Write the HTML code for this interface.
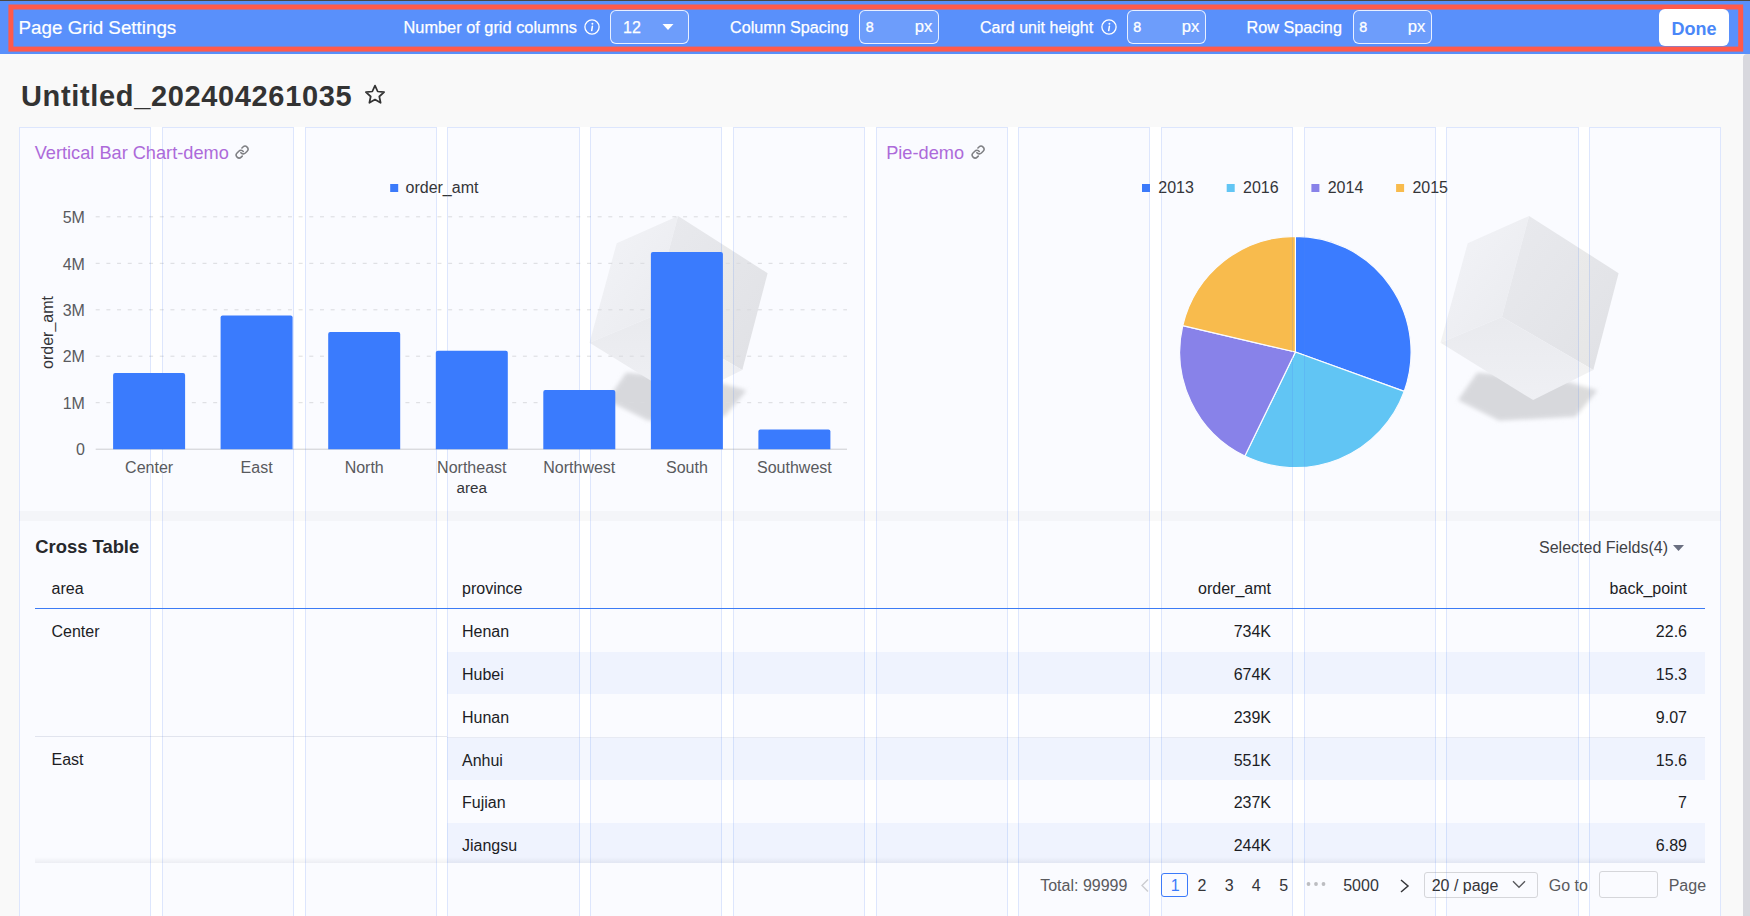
<!DOCTYPE html>
<html><head><meta charset="utf-8">
<style>
*{box-sizing:border-box;margin:0;padding:0}
html,body{width:1750px;height:916px;overflow:hidden;background:#f9f9f9;font-family:"Liberation Sans",sans-serif;position:relative}
.a{position:absolute;white-space:nowrap;line-height:1}
.w{color:#fff}
.t16{font-size:16px}
.r{text-align:right}
.c{text-align:center}
#hdr{position:absolute;left:0;top:0;width:1750px;height:54px;background:#5990fb}
#topline{position:absolute;left:0;top:0;width:1750px;height:1px;background:#4b4943}
.inp{position:absolute;top:10px;height:34px;border:1px solid rgba(255,255,255,.85);border-radius:6px;background:rgba(255,255,255,.12)}
.info{position:absolute;top:19px;width:16px;height:16px}
.card{position:absolute;background:#fff}
.col{position:absolute;top:127px;height:800px;width:132.15px;border:1px solid rgba(80,130,245,.17);background:rgba(80,130,245,.033)}
.lab{color:#595959}
.dk{color:#262626}
</style></head><body>
<div id="hdr"></div>
<div id="topline"></div>
<svg class="a" style="left:0;top:0" width="1750" height="60"><rect x="10.9" y="7.0" width="1729.8" height="42.1" fill="none" stroke="#ff5a4b" stroke-width="5"/></svg>
<div class="a w" style="left:18.6px;top:19.3px;font-size:18.8px;-webkit-text-stroke:0.2px #fff">Page Grid Settings</div>
<div class="a w" style="left:403.5px;top:18.9px;font-size:16.35px;-webkit-text-stroke:0.25px #fff">Number of grid columns</div>
<svg class="info" style="left:584px" viewBox="0 0 16 16"><circle cx="8" cy="8" r="7.1" fill="none" stroke="#fff" stroke-width="1.3"/><circle cx="8.4" cy="4.7" r="0.95" fill="#fff"/><path d="M8.4 7.2L7.7 11.6" stroke="#fff" stroke-width="1.5" stroke-linecap="round"/></svg>
<div class="inp" style="left:610px;width:79px"></div>
<div class="a w t16" style="left:623px;top:20.1px;-webkit-text-stroke:0.25px #fff">12</div>
<svg class="a" style="left:662px;top:23px" width="12" height="8" viewBox="0 0 12 8"><path d="M0.5 1h11l-5.5 6z" fill="#fff"/></svg>
<div class="a w" style="left:730px;top:18.9px;font-size:16.15px;-webkit-text-stroke:0.25px #fff">Column Spacing</div>
<div class="inp" style="left:859px;width:80px"></div>
<div class="a w" style="left:865.7px;top:20px;font-size:14.3px;-webkit-text-stroke:0.35px #fff">8</div>
<div class="a w r" style="left:880px;width:52.3px;top:19.0px;font-size:16.6px;-webkit-text-stroke:0.2px #fff">px</div>
<div class="a w" style="left:980px;top:18.9px;font-size:16.05px;-webkit-text-stroke:0.25px #fff">Card unit height</div>
<svg class="info" style="left:1101px" viewBox="0 0 16 16"><circle cx="8" cy="8" r="7.1" fill="none" stroke="#fff" stroke-width="1.3"/><circle cx="8.4" cy="4.7" r="0.95" fill="#fff"/><path d="M8.4 7.2L7.7 11.6" stroke="#fff" stroke-width="1.5" stroke-linecap="round"/></svg>
<div class="inp" style="left:1127px;width:79px"></div>
<div class="a w" style="left:1133.2px;top:20px;font-size:14.3px;-webkit-text-stroke:0.35px #fff">8</div>
<div class="a w r" style="left:1147px;width:52.3px;top:19.0px;font-size:16.6px;-webkit-text-stroke:0.2px #fff">px</div>
<div class="a w" style="left:1246.5px;top:18.9px;font-size:16.2px;-webkit-text-stroke:0.25px #fff">Row Spacing</div>
<div class="inp" style="left:1353px;width:79px"></div>
<div class="a w" style="left:1359.2px;top:20px;font-size:14.3px;-webkit-text-stroke:0.35px #fff">8</div>
<div class="a w r" style="left:1373px;width:52.3px;top:19.0px;font-size:16.6px;-webkit-text-stroke:0.2px #fff">px</div>
<div class="a" style="left:1659px;top:9px;width:70px;height:37px;background:#fff;border-radius:6px"></div>
<div class="a c" style="left:1659px;top:19.5px;width:70px;font-size:18px;font-weight:bold;color:#4a87f8">Done</div>

<!-- title -->
<div class="a" style="left:21px;top:81.5px;font-size:29px;font-weight:bold;color:#333;letter-spacing:0.65px">Untitled_202404261035</div>
<svg class="a" style="left:364px;top:84.4px" width="22" height="22" viewBox="0 0 22 22"><path d="M11 1.6l2.7 5.9 6.4.7-4.8 4.3 1.3 6.3L11 15.6l-5.6 3.2 1.3-6.3L1.9 8.2l6.4-.7z" fill="none" stroke="#333" stroke-width="1.75" stroke-linejoin="round"/></svg>

<div class="card" style="left:19px;top:127px;width:1702px;height:384px"></div>
<div class="card" style="left:19px;top:520.5px;width:1702px;height:400px"></div>

<div id="content"><svg class="a" style="left:0;top:0" width="1750" height="916" viewBox="0 0 1750 916" font-family="Liberation Sans">
<defs><filter id="blur" x="-20%" y="-20%" width="140%" height="140%"><feGaussianBlur stdDeviation="2.2"/></filter>
<linearGradient id="gl" x1="0" y1="0" x2="1" y2="1"><stop offset="0" stop-color="#f8f8f8"/><stop offset="1" stop-color="#eeeeee"/></linearGradient>
<linearGradient id="gr" x1="0" y1="0" x2="1" y2="1"><stop offset="0" stop-color="#eeeeee"/><stop offset="1" stop-color="#e5e5e5"/></linearGradient>
<linearGradient id="gb" x1="0" y1="0" x2="0" y2="1"><stop offset="0" stop-color="#eeeeee"/><stop offset="1" stop-color="#f4f4f4"/></linearGradient>
</defs>
<polygon points="607.2,400.1 626.3,372.8 713.6,381.0 746.4,390.5 724.5,416.5 648.1,420.6" fill="#dbdbdb" filter="url(#blur)"/>
<polygon points="616.7,243.2 678.1,215.9 650.9,316.9 589.5,342.8" fill="url(#gl)"/>
<polygon points="678.1,215.9 767.6,273.2 742.3,370.1 650.9,316.9" fill="url(#gr)"/>
<polygon points="589.5,342.8 650.9,316.9 742.3,370.1 682.2,400.1" fill="url(#gb)"/>

<line x1="95.7" x2="847" y1="402.7" y2="402.7" stroke="#dedede" stroke-width="1" stroke-dasharray="4 6.68"/>
<line x1="95.7" x2="847" y1="356.2" y2="356.2" stroke="#dedede" stroke-width="1" stroke-dasharray="4 6.68"/>
<line x1="95.7" x2="847" y1="309.8" y2="309.8" stroke="#dedede" stroke-width="1" stroke-dasharray="4 6.68"/>
<line x1="95.7" x2="847" y1="263.3" y2="263.3" stroke="#dedede" stroke-width="1" stroke-dasharray="4 6.68"/>
<line x1="95.7" x2="847" y1="216.8" y2="216.8" stroke="#dedede" stroke-width="1" stroke-dasharray="4 6.68"/>
<line x1="95.7" x2="847" y1="449.2" y2="449.2" stroke="#d0d0d0" stroke-width="1"/>
<g fill="#595959" font-size="16"><text x="84.9" y="455.4" text-anchor="end">0</text>
<text x="84.9" y="408.9" text-anchor="end">1M</text>
<text x="84.9" y="362.4" text-anchor="end">2M</text>
<text x="84.9" y="316.0" text-anchor="end">3M</text>
<text x="84.9" y="269.5" text-anchor="end">4M</text>
<text x="84.9" y="223.0" text-anchor="end">5M</text>
<text x="149.1" y="472.8" text-anchor="middle">Center</text>
<text x="256.6" y="472.8" text-anchor="middle">East</text>
<text x="364.2" y="472.8" text-anchor="middle">North</text>
<text x="471.8" y="472.8" text-anchor="middle">Northeast</text><text x="471.8" y="493.4" text-anchor="middle" fill="#333" font-size="15.2">area</text>
<text x="579.3" y="472.8" text-anchor="middle">Northwest</text>
<text x="686.9" y="472.8" text-anchor="middle">South</text>
<text x="794.4" y="472.8" text-anchor="middle">Southwest</text>
</g>
<rect x="390.2" y="184" width="8" height="8" fill="#3a7afa"/>
<text x="405.5" y="192.7" font-size="16" fill="#333">order_amt</text>
<text transform="translate(53.2,332.5) rotate(-90)" text-anchor="middle" font-size="16" fill="#333">order_amt</text>
<polygon points="1458.2,400.1 1477.3,372.8 1564.6,381.0 1597.4,390.5 1575.5,416.5 1499.1,420.6" fill="#dbdbdb" filter="url(#blur)"/>
<polygon points="1467.7,243.2 1529.1,215.9 1501.9,316.9 1440.5,342.8" fill="url(#gl)"/>
<polygon points="1529.1,215.9 1618.6,273.2 1593.3,370.1 1501.9,316.9" fill="url(#gr)"/>
<polygon points="1440.5,342.8 1501.9,316.9 1593.3,370.1 1533.2,400.1" fill="url(#gb)"/>

<path d="M1295.4,352L1295.40,236.30A115.7,115.7 0 0 1 1404.19,391.38Z" fill="#3a7cff" stroke="#fff" stroke-width="1.2" stroke-linejoin="round"/>
<path d="M1295.4,352L1404.19,391.38A115.7,115.7 0 0 1 1244.86,456.08Z" fill="#62c8f4" stroke="#fff" stroke-width="1.2" stroke-linejoin="round"/>
<path d="M1295.4,352L1244.86,456.08A115.7,115.7 0 0 1 1182.76,325.58Z" fill="#8a83e9" stroke="#fff" stroke-width="1.2" stroke-linejoin="round"/>
<path d="M1295.4,352L1182.76,325.58A115.7,115.7 0 0 1 1295.40,236.30Z" fill="#fdbd48" stroke="#fff" stroke-width="1.2" stroke-linejoin="round"/>

<g font-size="16" fill="#333"><rect x="1142.0" y="184" width="8" height="8" fill="#3a7afa"/><text x="1158.3" y="192.8">2013</text>
<rect x="1226.7" y="184" width="8" height="8" fill="#62c8f4"/><text x="1243.0" y="192.8">2016</text>
<rect x="1311.4" y="184" width="8" height="8" fill="#8a83e9"/><text x="1327.7" y="192.8">2014</text>
<rect x="1396.1" y="184" width="8" height="8" fill="#fdbd48"/><text x="1412.4" y="192.8">2015</text>
</g>
</svg>
<div class="a" style="left:34.7px;top:143.8px;font-size:18.2px;color:#b06ad9">Vertical Bar Chart-demo</div>
<svg class="a" style="left:234.9px;top:144.9px" width="14.2" height="14.2" viewBox="0 0 24 24"><g fill="none" stroke="#808080" stroke-width="2.6" stroke-linecap="round"><path d="M10 13a5 5 0 0 0 7.54.54l3-3a5 5 0 0 0-7.07-7.07l-1.72 1.71"/><path d="M14 11a5 5 0 0 0-7.54-.54l-3 3a5 5 0 0 0 7.07 7.07l1.71-1.71"/></g></svg>
<div class="a" style="left:886.2px;top:143.8px;font-size:18.2px;color:#b06ad9">Pie-demo</div>
<svg class="a" style="left:970.8px;top:144.9px" width="14.2" height="14.2" viewBox="0 0 24 24"><g fill="none" stroke="#808080" stroke-width="2.6" stroke-linecap="round"><path d="M10 13a5 5 0 0 0 7.54.54l3-3a5 5 0 0 0-7.07-7.07l-1.72 1.71"/><path d="M14 11a5 5 0 0 0-7.54-.54l-3 3a5 5 0 0 0 7.07 7.07l1.71-1.71"/></g></svg>

<div class="a" style="left:35.3px;top:538.4px;font-size:18.4px;font-weight:bold;color:#262626">Cross Table</div>
<div class="a t16 r" style="left:1468px;width:200px;top:539.5px;color:#404040">Selected Fields(4)</div>
<svg class="a" style="left:1673px;top:544px" width="11" height="8" viewBox="0 0 11 8"><path d="M0 1h11L5.5 7z" fill="#6b6f7d"/></svg>
<div class="a t16" style="left:51.5px;top:581px;color:#1a1a1a">area</div>
<div class="a t16" style="left:462px;top:581px;color:#1a1a1a">province</div>
<div class="a t16 r" style="left:1071px;width:200px;top:581px;color:#1a1a1a">order_amt</div>
<div class="a t16 r" style="left:1487px;width:200px;top:581px;color:#1a1a1a">back_point</div>
<div class="a" style="left:35px;top:608px;width:1670px;height:1px;background:#3b7bf5"></div>
<div class="a" style="left:447.3px;top:652.15px;width:1257.4px;height:42.1px;background:#f4f7fe"></div>
<div class="a" style="left:447.3px;top:737.65px;width:1257.4px;height:42.1px;background:#f4f7fe"></div>
<div class="a" style="left:447.3px;top:823.15px;width:1257.4px;height:39.85px;background:#f4f7fe"></div>
<div class="a t16" style="left:462px;top:624.26px;color:#1a1a1a">Henan</div>
<div class="a t16 r" style="left:1071px;width:200px;top:624.26px;color:#1a1a1a">734K</div>
<div class="a t16 r" style="left:1487px;width:200px;top:624.26px;color:#1a1a1a">22.6</div>
<div class="a t16" style="left:462px;top:667.01px;color:#1a1a1a">Hubei</div>
<div class="a t16 r" style="left:1071px;width:200px;top:667.01px;color:#1a1a1a">674K</div>
<div class="a t16 r" style="left:1487px;width:200px;top:667.01px;color:#1a1a1a">15.3</div>
<div class="a t16" style="left:462px;top:709.76px;color:#1a1a1a">Hunan</div>
<div class="a t16 r" style="left:1071px;width:200px;top:709.76px;color:#1a1a1a">239K</div>
<div class="a t16 r" style="left:1487px;width:200px;top:709.76px;color:#1a1a1a">9.07</div>
<div class="a t16" style="left:462px;top:752.51px;color:#1a1a1a">Anhui</div>
<div class="a t16 r" style="left:1071px;width:200px;top:752.51px;color:#1a1a1a">551K</div>
<div class="a t16 r" style="left:1487px;width:200px;top:752.51px;color:#1a1a1a">15.6</div>
<div class="a t16" style="left:462px;top:795.26px;color:#1a1a1a">Fujian</div>
<div class="a t16 r" style="left:1071px;width:200px;top:795.26px;color:#1a1a1a">237K</div>
<div class="a t16 r" style="left:1487px;width:200px;top:795.26px;color:#1a1a1a">7</div>
<div class="a t16" style="left:462px;top:838.01px;color:#1a1a1a">Jiangsu</div>
<div class="a t16 r" style="left:1071px;width:200px;top:838.01px;color:#1a1a1a">244K</div>
<div class="a t16 r" style="left:1487px;width:200px;top:838.01px;color:#1a1a1a">6.89</div>
<div class="a" style="left:35px;top:735.9px;width:412px;height:1px;background:#e6e8ee"></div><div class="a" style="left:447.3px;top:736.9px;width:1257.4px;height:1px;background:#eceef3"></div>
<div class="a t16" style="left:51.5px;top:623.5px;color:#1a1a1a">Center</div>
<div class="a t16" style="left:51.5px;top:752.3px;color:#1a1a1a">East</div>
<div class="a" style="left:35px;top:857px;width:1670px;height:6px;background:linear-gradient(rgba(0,0,0,0),rgba(0,10,40,.055))"></div>

<div class="a t16" style="left:1040.2px;top:878.4px;color:#595959">Total: 99999</div>
<svg class="a" style="left:1139px;top:878px" width="11" height="15" viewBox="0 0 11 15"><path d="M9 1.5L3 7.5l6 6" fill="none" stroke="#d0d0d0" stroke-width="1.4"/></svg>
<div class="a" style="left:1161px;top:873px;width:27px;height:24px;border:1px solid #3a7afa;border-radius:3px"></div>
<div class="a t16 c" style="left:1161.7px;width:27px;top:878.4px;color:#3a7afa">1</div>
<div class="a t16 c" style="left:1191.9px;width:20px;top:878.4px;color:#333">2</div>
<div class="a t16 c" style="left:1219.2px;width:20px;top:878.4px;color:#333">3</div>
<div class="a t16 c" style="left:1246.2px;width:20px;top:878.4px;color:#333">4</div>
<div class="a t16 c" style="left:1273.7px;width:20px;top:878.4px;color:#333">5</div>
<svg class="a" style="left:1306px;top:881px" width="20" height="6" viewBox="0 0 20 6"><circle cx="2.5" cy="3" r="1.9" fill="#bfbfbf"/><circle cx="10" cy="3" r="1.9" fill="#bfbfbf"/><circle cx="17.5" cy="3" r="1.9" fill="#bfbfbf"/></svg>
<div class="a t16" style="left:1343.2px;top:878.4px;color:#333">5000</div>
<svg class="a" style="left:1399px;top:879px" width="12" height="14" viewBox="0 0 12 14"><path d="M2 1l7 6-7 6" fill="none" stroke="#333" stroke-width="1.5"/></svg>
<div class="a" style="left:1424px;top:872px;width:114px;height:26px;border:1px solid #d9d9d9;border-radius:3px"></div>
<div class="a t16" style="left:1431.7px;top:878.4px;color:#333">20 / page</div>
<svg class="a" style="left:1512px;top:880px" width="14" height="9" viewBox="0 0 14 9"><path d="M1 1.2l6 6 6-6" fill="none" stroke="#595959" stroke-width="1.4"/></svg>
<div class="a t16" style="left:1548.7px;top:878.4px;color:#595959">Go to</div>
<div class="a" style="left:1599px;top:871px;width:58.5px;height:27px;border:1px solid #d9d9d9;border-radius:3px;background:#fff"></div>
<div class="a t16" style="left:1668.7px;top:878.4px;color:#595959">Page</div>
</div>

<div id="cols">
<div class="col" style="left:19.25px"></div>
<div class="col" style="left:161.97px"></div>
<div class="col" style="left:304.69px"></div>
<div class="col" style="left:447.41px"></div>
<div class="col" style="left:590.13px"></div>
<div class="col" style="left:732.85px"></div>
<div class="col" style="left:875.57px"></div>
<div class="col" style="left:1018.29px"></div>
<div class="col" style="left:1161.01px"></div>
<div class="col" style="left:1303.73px"></div>
<div class="col" style="left:1446.45px"></div>
<div class="col" style="left:1589.17px"></div>
</div>
</div>
<svg class="a" style="left:0;top:0" width="1750" height="916" viewBox="0 0 1750 916"><g fill="#3a7bfd"><path d="M113.1,449.2V375.0Q113.1,373.0 115.1,373.0H183.1Q185.1,373.0 185.1,375.0V449.2Z"/>
<path d="M220.6,449.2V317.5Q220.6,315.5 222.6,315.5H290.6Q292.6,315.5 292.6,317.5V449.2Z"/>
<path d="M328.2,449.2V334.0Q328.2,332.0 330.2,332.0H398.2Q400.2,332.0 400.2,334.0V449.2Z"/>
<path d="M435.8,449.20000000000005V352.8Q435.8,350.8 437.8,350.8H505.8Q507.8,350.8 507.8,352.8V449.20000000000005Z"/>
<path d="M543.3,449.2V392.0Q543.3,390.0 545.3,390.0H613.3Q615.3,390.0 615.3,392.0V449.2Z"/>
<path d="M650.9,449.2V254.0Q650.9,252.0 652.9,252.0H720.9Q722.9,252.0 722.9,254.0V449.2Z"/>
<path d="M758.4,449.2V431.4Q758.4,429.4 760.4,429.4H828.4Q830.4,429.4 830.4,431.4V449.2Z"/>
</g></svg>
<div class="a" style="left:1743px;top:54px;width:7px;height:870px;background:#d8d8de;border-radius:4px 0 0 0"></div>
</body></html>
